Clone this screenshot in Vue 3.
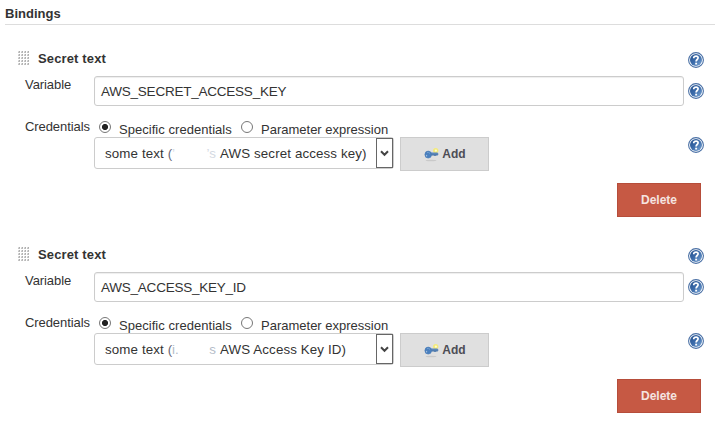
<script setup>
import { ref } from 'vue'

const bindings = ref([
  { variable: 'AWS_SECRET_ACCESS_KEY', name: 'AWS secret access key)', lead: '’', tail: '’s', cls: 'first' },
  { variable: 'AWS_ACCESS_KEY_ID', name: 'AWS Access Key ID)', lead: 'i.', tail: 's', cls: 'second' },
])
</script>

<template>
  <main class="page">
    <svg class="defs" width="0" height="0" aria-hidden="true">
      <defs>
        <linearGradient id="blue" x1="0" y1="0" x2="1" y2="1">
          <stop offset="0" stop-color="#234f8c" />
          <stop offset="0.5" stop-color="#3c6cab" />
          <stop offset="1" stop-color="#7fa9d6" />
        </linearGradient>
        <pattern id="grip" width="3" height="3" patternUnits="userSpaceOnUse">
          <rect width="2" height="2" fill="#dcdcdc" />
          <rect x="1" width="1" height="1" fill="#adadad" />
          <rect y="1" width="1" height="1" fill="#c5c5c5" />
          <rect x="1" y="1" width="1" height="1" fill="#bababa" />
        </pattern>
        <symbol id="help" viewBox="0 0 16 16">
          <circle cx="8" cy="8" r="7.4" fill="#fff" stroke="#4a70a5" stroke-width="1.1" />
          <circle cx="8" cy="8" r="6" fill="url(#blue)" />
          <path d="M5.8 6.2V5.3Q6.2 4.1 8 4.1Q10.1 4.1 10.1 5.8C10.1 7.6 8.1 7.4 8.1 9.5" fill="none" stroke="#fff" stroke-width="1.7" />
          <rect x="7.2" y="10.7" width="1.9" height="1.8" fill="#fff" />
        </symbol>
        <symbol id="key" viewBox="0 0 16 16">
          <ellipse cx="8" cy="13.5" rx="5.5" ry="0.7" fill="#c9c9c9" />
          <circle cx="12.7" cy="3.6" r="2.7" fill="#f3ea7c" />
          <path d="M6.5 5.6H14.4L15.6 6.9L14.8 8.3H12.8V9H11.2V8.3H6.5Z" fill="#5b86b9" />
          <path d="M7.5 8H14.5" stroke="#416a9e" stroke-width="0.7" />
          <ellipse cx="5.2" cy="7.6" rx="3.3" ry="3.5" fill="#4a80bf" stroke="#487bb5" stroke-width="0.6" />
          <path d="M4 5.6Q6 4.8 7 6.5" stroke="#73a0d1" fill="none" />
          <ellipse cx="3.6" cy="8.6" rx="0.6" ry="0.9" fill="#a9c1dc" />
          <circle cx="12.9" cy="3.6" r="1.1" fill="#fffbd1" />
        </symbol>
      </defs>
    </svg>

    <h1 class="heading">Bindings</h1>

    <section v-for="(b, i) in bindings" :key="i" class="binding">
      <header class="title-row">
        <svg class="grip" width="12" height="15"><rect width="12" height="14" fill="url(#grip)" /></svg>
        <h2 class="title">Secret text</h2>
        <svg class="help"><use href="#help" /></svg>
      </header>

      <div class="row variable">
        <span class="label">Variable</span>
        <div class="input"><span>{{ b.variable }}</span></div>
        <svg class="help"><use href="#help" /></svg>
      </div>

      <div class="row credentials">
        <span class="label">Credentials</span>
        <div class="field">
          <div class="radios">
            <span class="radio on"></span><span class="radio-text specific">Specific credentials</span>
            <span class="radio"></span><span class="radio-text">Parameter expression</span>
          </div>
          <div class="controls">
            <div class="select">
              <span class="some">some text <span class="paren">(</span></span>
              <span class="faded" :class="b.cls"><span>{{ b.lead }}</span><span>{{ b.tail }}</span></span>
              <span class="name">{{ b.name }}</span>
              <span class="arrow"><svg width="9" height="7" viewBox="0 0 9 7"><path d="M1 1.3L4.5 4.8L8 1.3" fill="none" stroke="#444" stroke-width="2" /></svg></span>
            </div>
            <button class="add"><svg width="16" height="16"><use href="#key" /></svg><span>Add</span></button>
          </div>
        </div>
        <svg class="help"><use href="#help" /></svg>
      </div>

      <div class="actions"><button class="delete">Delete</button></div>
    </section>
  </main>
</template>

<style>
body { margin: 0; background: #fff; }
</style>

<style scoped>
.page { box-sizing: border-box; width: 722px; height: 424px; overflow: hidden; padding: 0 7px 0 5px; font: 13px/16px "Liberation Sans", Arial, sans-serif; color: #333; }
.defs { display: block; height: 0; }
.heading { box-sizing: border-box; height: 25px; margin: 0 0 19px; padding-top: 6px; border-bottom: 1px solid #ddd; font-size: 13px; line-height: 16px; }
.binding { display: flex; flex-direction: column; height: 196px; padding: 0 6px 0 13px; }
.title-row { display: flex; height: 32px; }
.grip { margin-top: 7px; }
.title { flex: 1; margin: 7px 0 0 8px; font-size: 13px; line-height: 16px; letter-spacing: .14px; }
.help { width: 16px; height: 16px; flex: none; }
.title-row .help { margin: 8px 5px 0 0; }
.row { display: flex; padding: 0 5px 0 7px; }
.label { width: 69px; flex: none; letter-spacing: -.08px; }
.variable { height: 41px; }
.variable .label { margin-top: 1px; }
.variable .help { margin: 7px 0 0 4px; }
.input { box-sizing: border-box; flex: 1; height: 30px; padding: 7px 6px 5px; border: 1px solid #ccc; border-radius: 3px; box-shadow: inset 0 1px 1px #eee; font-size: 13.5px; letter-spacing: -.23px; }
.credentials { height: 66px; }
.credentials .label { margin-top: 2px; }
.credentials .help { margin-top: 20px; }
.field { flex: 1; }
.radios { display: flex; height: 20px; }
.radio { box-sizing: border-box; width: 12px; height: 12px; margin: 4px 8px 0 5px; border: 1px solid #777; border-radius: 50%; background: #fff; }
.radio.on { background: radial-gradient(circle, #222 0 2.7px, #fff 3.4px); }
.radio-text { margin-top: 5px; white-space: nowrap; }
.specific { width: 117px; letter-spacing: .04px; }
.controls { display: flex; gap: 6px; }
.select { box-sizing: border-box; width: 300px; height: 32px; display: flex; align-items: center; padding-left: 10px; border: 1px solid #ccc; border-radius: 3px; white-space: nowrap; font-size: 13.33px; letter-spacing: .12px; }
.some, .faded, .name { padding-top: 2px; }
.some { width: 67px; }
.paren { color: #667; }
.faded { display: flex; justify-content: space-between; width: 44px; margin-right: 4px; color: #b8c2d0; opacity: .6; }
.faded.second { color: #8390a5; }
.name { flex: 1; }
.arrow { box-sizing: border-box; display: grid; place-items: center; width: 17px; height: 30px; border: 1px solid #666; }
button { box-sizing: border-box; padding: 0; font: bold 12px/16px "Liberation Sans", Arial, sans-serif; }
.add { display: flex; align-items: center; justify-content: center; gap: 3px; width: 89px; height: 34px; border: 1px solid #ccc; background: #e0e0e0; color: #4d4d55; }
.add svg { margin-top: 2px; }
.actions { display: flex; justify-content: flex-end; padding: 0 8px 0 0; }
.delete { width: 84px; height: 34px; border: 1px solid #b64d3a; background: #c65944; color: #f5e4e0; }
</style>
